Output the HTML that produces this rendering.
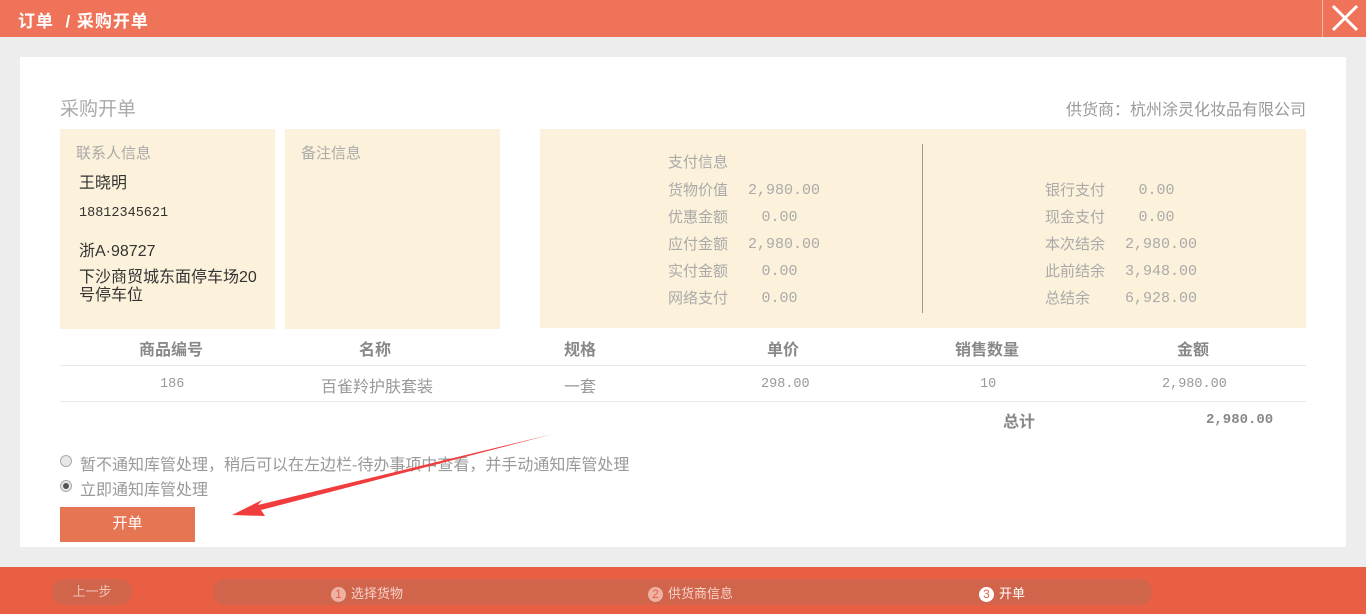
<!DOCTYPE html>
<html><head><meta charset="utf-8"><style>
*{margin:0;padding:0;box-sizing:border-box}
body{width:1366px;height:614px;overflow:hidden;background:#ededed;font-family:"Liberation Sans","Noto Sans CJK SC",sans-serif;position:relative;color:#999}
.a{position:absolute;white-space:nowrap}
.m{font-family:"Liberation Mono","Noto Sans CJK SC",monospace;font-size:12.5px}
.hdr{left:0;top:0;width:1366px;height:37px;background:#ef7358}
.panel{left:20px;top:57px;width:1326px;height:490px;background:#fff}
.box{background:#fcf1da}
.g{color:#aaa;font-size:15px}
.d{color:#333;font-size:16px}
.foot{left:0;top:567px;width:1366px;height:47px;background:#e95f43}
.pill{background:#d0654c;border-radius:13px;height:26px}
.num{display:inline-block;width:15px;height:15px;border-radius:50%;background:#eeb2a4;color:#e95f43;font-size:12px;text-align:center;line-height:15px;margin-right:5px}
</style></head><body>
<div class="a hdr"></div>
<div class="a" style="left:18px;top:7px;color:#fff;font-size:17px;font-weight:bold;letter-spacing:1px">订单 &nbsp;/ 采购开单</div>
<div class="a" style="left:1322px;top:0;width:1px;height:37px;background:#f6b5a6"></div>
<svg class="a" style="left:1330px;top:4px" width="30" height="28"><path d="M3 2L27 26M27 2L3 26" stroke="#fff" stroke-width="3"/></svg>
<div class="a panel"></div>
<div class="a" style="left:60px;top:94px;font-size:19px;color:#aaa">采购开单</div>
<div class="a" style="left:1066px;top:96px;font-size:16px;color:#999">供货商：杭州涂灵化妆品有限公司</div>
<div class="a box" style="left:60px;top:129px;width:215px;height:200px"></div>
<div class="a box" style="left:285px;top:129px;width:215px;height:200px"></div>
<div class="a box" style="left:540px;top:129px;width:766px;height:199px"></div>
<div class="a g" style="left:76px;top:142px">联系人信息</div>
<div class="a d" style="left:79px;top:169px">王晓明</div>
<div class="a d m" style="left:79px;top:206px;font-size:13.5px">18812345621</div>
<div class="a d" style="left:79px;top:237px">浙A·98727</div>
<div class="a d" style="left:79px;top:269px;line-height:18px;white-space:normal;width:180px">下沙商贸城东面停车场20号停车位</div>
<div class="a g" style="left:301px;top:142px">备注信息</div>
<div class="a g" style="left:668px;top:151px">支付信息</div>
<div class="a" style="left:922px;top:144px;width:1px;height:169px;background:#999"></div>
<div class="a g" style="left:668px;top:177px;line-height:27px">货物价值<br>优惠金额<br>应付金额<br>实付金额<br>网络支付</div>
<div class="a g m" style="left:748px;top:177px;line-height:27px;text-align:center;width:63px">2,980.00<br>0.00<br>2,980.00<br>0.00<br>0.00</div>
<div class="a g" style="left:1045px;top:177px;line-height:27px">银行支付<br>现金支付<br>本次结余<br>此前结余<br>总结余</div>
<div class="a g m" style="left:1125px;top:177px;line-height:27px;text-align:center;width:63px">0.00<br>0.00<br>2,980.00<br>3,948.00<br>6,928.00</div>
<div class="a" style="left:60px;top:365px;width:1246px;height:1px;background:#e8e8e8"></div>
<div class="a" style="left:60px;top:401px;width:1246px;height:1px;background:#e8e8e8"></div>
<div class="a" style="left:139px;top:336px;font-size:16px;color:#888;font-weight:bold">商品编号</div>
<div class="a" style="left:359px;top:336px;font-size:16px;color:#888;font-weight:bold">名称</div>
<div class="a" style="left:564px;top:336px;font-size:16px;color:#888;font-weight:bold">规格</div>
<div class="a" style="left:767px;top:336px;font-size:16px;color:#888;font-weight:bold">单价</div>
<div class="a" style="left:955px;top:336px;font-size:16px;color:#888;font-weight:bold">销售数量</div>
<div class="a" style="left:1177px;top:336px;font-size:16px;color:#888;font-weight:bold">金额</div>
<div class="a m" style="left:160px;top:377px;font-size:13.5px">186</div>
<div class="a" style="left:321px;top:373px;font-size:16px">百雀羚护肤套装</div>
<div class="a" style="left:564px;top:373px;font-size:16px">一套</div>
<div class="a m" style="left:761px;top:377px;font-size:13.5px">298.00</div>
<div class="a m" style="left:980px;top:377px;font-size:13.5px">10</div>
<div class="a m" style="left:1162px;top:377px;font-size:13.5px">2,980.00</div>
<div class="a" style="left:1003px;top:408px;font-size:16px;color:#888;font-weight:bold">总计</div>
<div class="a m" style="left:1206px;top:412px;font-size:14px;color:#888;font-weight:bold">2,980.00</div>
<div class="a" style="left:60px;top:455px;width:12px;height:12px;border-radius:50%;border:1px solid #aaa;background:#e8e8e8"></div>
<div class="a" style="left:80px;top:451px;font-size:16px">暂不通知库管处理，稍后可以在左边栏-待办事项中查看，并手动通知库管处理</div>
<div class="a" style="left:60px;top:480px;width:12px;height:12px;border-radius:50%;border:1px solid #aaa;background:#e8e8e8"><div style="width:6px;height:6px;margin:2px;border-radius:50%;background:#555"></div></div>
<div class="a" style="left:80px;top:476px;font-size:16px">立即通知库管处理</div>
<div class="a" style="left:60px;top:507px;width:135px;height:35px;background:#e67554;color:#fff;font-size:15px;text-align:center;line-height:33px">开单</div>
<svg class="a" style="left:0;top:0" width="1366" height="614"><polygon points="553,434 258,505 262,500 232,515 265,516 261,510 553,434" fill="#f03c3c"/></svg>
<div class="a foot"></div>
<div class="a pill" style="left:52px;top:579px;width:80px;color:#f1c0b3;font-size:13px;text-align:center;line-height:26px">上一步</div>
<div class="a pill" style="left:213px;top:579px;width:939px"></div>
<div class="a" style="left:331px;top:583px;font-size:13px;color:#f6d3ca"><span class="num">1</span>选择货物</div>
<div class="a" style="left:648px;top:583px;font-size:13px;color:#f6d3ca"><span class="num">2</span>供货商信息</div>
<div class="a" style="left:979px;top:583px;font-size:13px;color:#fff"><span class="num" style="background:#fff">3</span>开单</div>
</body></html>
